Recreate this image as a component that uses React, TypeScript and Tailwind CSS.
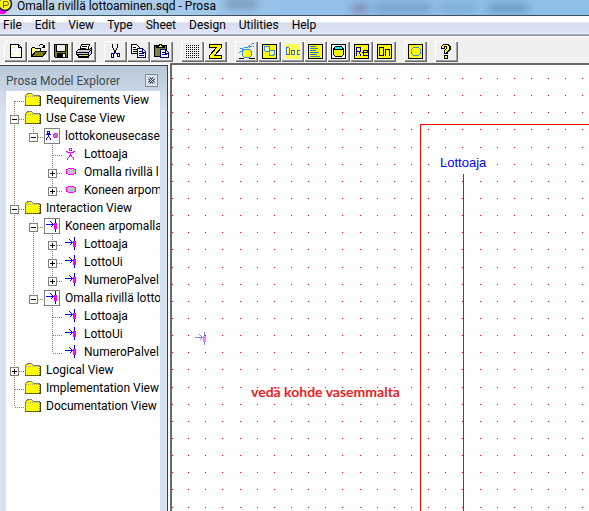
import React from "react";

type TreeItem = {
  label: string;
  icon: "folder" | "usecase" | "actor" | "oval" | "sequence" | "object";
  open?: boolean;
  children?: TreeItem[];
};

const lifelines: TreeItem[] = ["Lottoaja", "LottoUi", "NumeroPalvel"].map((label) => ({ label, icon: "object" }));

const tree: TreeItem[] = [
  { label: "Requirements View", icon: "folder" },
  {
    label: "Use Case View",
    icon: "folder",
    open: true,
    children: [
      {
        label: "lottokoneusecase.",
        icon: "usecase",
        open: true,
        children: [
          { label: "Lottoaja", icon: "actor" },
          { label: "Omalla rivillä l", icon: "oval", open: false },
          { label: "Koneen arpom", icon: "oval", open: false },
        ],
      },
    ],
  },
  {
    label: "Interaction View",
    icon: "folder",
    open: true,
    children: [
      {
        label: "Koneen arpomalla",
        icon: "sequence",
        open: true,
        children: lifelines.map((item) => ({ ...item, open: false })),
      },
      { label: "Omalla rivillä lotto", icon: "sequence", open: true, children: lifelines },
    ],
  },
  { label: "Logical View", icon: "folder", open: false },
  { label: "Implementation View", icon: "folder" },
  { label: "Documentation View", icon: "folder" },
];

function ObjectMark() {
  return (
    <>
      <path d="M2 7.5h8M6.5 4.5l3 3l-3 3M11.5 2v13" fill="none" stroke="#0000ff" />
      <path d="M10 6h3v6h-3z" fill="#ff00ff" />
    </>
  );
}

function TreeIcon({ icon }: { icon: TreeItem["icon"] }) {
  return (
    <svg width="16" height="18" viewBox="0 0 16 18" shapeRendering="crispEdges" className="shrink-0" aria-hidden="true">
      {icon === "folder" && (
        <>
          <path d="M0 4h1v-1h1v-1h5v1h1v1h7v11h-15z" fill="#ffff00" />
          <path d="M.5 14V4.5l1-1h1v-1h4l2 2h6" fill="none" stroke="#808080" />
          <path d="M1 5.5h13" stroke="#b0b060" strokeDasharray="1 1" />
          <path d="M0 14.5h15M15.5 5v10" stroke="#404000" />
          <path d="M1 14.5h14M14.5 5v10" stroke="#808000" strokeDasharray="1 1" />
        </>
      )}
      {icon === "usecase" && (
        <>
          <path d="M.5 1.5h15v15H.5z" fill="#fff" stroke="#808080" />
          <path d="M3.5 4.500h2v2h-2zM2 7.500h5M4.500 7v3M3.500 10v1M5.500 10v1M2.500 11v2M6.500 11v2" fill="none" stroke="#0000ff" />
          <path d="M9 7h1v-1h3v1h1v3h-1v1h-3v-1h-1z" fill="#ff00ff" />
          <path d="M10 7h3v3h-3z" fill="#c080c0" />
        </>
      )}
      {icon === "actor" && (
        <path d="M6.5 3.5h2v2h-2zM3 6.5h2M10 6.5h2M4 7.5h7M7.5 7v4M6.5 10v2M8.5 10v2M5.5 12v1M9.5 12v1M4.5 13v2M10.5 13v2" fill="none" stroke="#ff00ff" />
      )}
      {icon === "oval" && (
        <path d="M5.500 5.500h5l1 1h1v4h-1l-1 1h-5l-1-1h-1v-4h1z" fill="#c0c0c0" stroke="#ff00ff" />
      )}
      {icon === "sequence" && (
        <>
          <path d="M.5 1.5h15v15H.5z" fill="#fff" stroke="#808080" />
          <ObjectMark />
        </>
      )}
      {icon === "object" && <ObjectMark />}
    </svg>
  );
}

function Guide({ d }: { d: string }) {
  return (
    <svg width="19" height="18" viewBox="0 0 19 18" shapeRendering="crispEdges" className="shrink-0" aria-hidden="true">
      <path d={d} fill="none" stroke="#808080" strokeDasharray="1 1" />
    </svg>
  );
}

function TreeRows({ items, trail = [] }: { items: TreeItem[]; trail?: boolean[] }) {
  return (
    <ul>
      {items.map((item, i) => {
        const last = i === items.length - 1;
        const first = trail.length === 0 && i === 0;
        const vertical = `M8.5 ${first ? 10 : 0}V${last ? 10 : 18}`;
        return (
          <li key={item.label}>
            <div className="flex h-[18px] items-center whitespace-nowrap">
              {trail.map((line, n) => (
                <Guide key={n} d={line ? "M8.500 0V18" : ""} />
              ))}
              <span className="relative h-[18px] w-[19px] shrink-0">
                <Guide d={`${vertical}M9 10.5H19`} />
                {item.open !== undefined && (
                  <button
                    aria-label={`${item.open ? "Collapse" : "Expand"} ${item.label}`}
                    className="absolute top-[6px] left-1 size-[9px] border border-[#808080] bg-white"
                  >
                    <svg viewBox="0 0 7 7" className="size-[7px]" shapeRendering="crispEdges">
                      <path d={item.open ? "M1 3.500h5" : "M1 3.500h5M3.500 1v5"} stroke="#000" />
                    </svg>
                  </button>
                )}
              </span>
              <TreeIcon icon={item.icon} />
              <span className="ml-[5px]">{item.label}</span>
            </div>
            {item.children && <TreeRows items={item.children} trail={[...trail, !last]} />}
          </li>
        );
      })}
    </ul>
  );
}

const YellowBox = ({ fill = "#ffff00" }: { fill?: string }) => (
  <path d="M4.500 3.500h14v14h-14z" fill={fill} stroke="#000" />
);

const gridDots = Array.from({ length: 49 }, (_, i) => `M${5 + (i % 7) * 2} ${4.5 + Math.floor(i / 7) * 2}h1`).join("");

const toolGroups: { name: string; art: React.ReactNode }[][] = [
  [
    {
      name: "New",
      art: (
        <>
          <path d="M6.500 3.500h8l3 3v10h-11z" fill="#fff" stroke="#000" />
          <path d="M14.500 3.500v3h3" fill="none" stroke="#000" />
          <path d="M8 6h1v1h-1zM11 9h1v1h-1zM8 13h1v1h-1zM14 13h1v1h-1zM15 10h1v1h-1z" fill="#e8e800" />
        </>
      ),
    },
    {
      name: "Open",
      art: (
        <>
          <path d="M4.500 15.500v-8l1-1h2l1 1h5v3" fill="#ffff80" stroke="#000" />
          <path d="M4.500 15.500l4-5h11l-4 5z" fill="#808000" stroke="#000" />
          <path d="M12 4.500h1M13 3.500h3M16 4.500h1M17.500 4v3M15 6.500h3M16 5.500h2" fill="none" stroke="#000" />
        </>
      ),
    },
    {
      name: "Save",
      art: (
        <>
          <path d="M4.500 3.500h13v13h-12l-1-1z" fill="#808000" stroke="#000" />
          <path d="M7 4h8v6H7z" fill="#f0f0f0" />
          <path d="M6.500 4v6.500h9V4" fill="none" stroke="#000" />
          <path d="M7 12h9v5H7z" />
          <path d="M13 13h2v3h-2z" fill="#fff" />
        </>
      ),
    },
    {
      name: "Print",
      art: (
        <>
          <path d="M8.500 3.500h8l-2 6h-8z" fill="#fff" stroke="#000" />
          <path d="M9 5.500h5M8 7.500h5" stroke="#000" />
          <path d="M3.500 10.500l2-2h11l2-2v6l-3 3h-10l-2-2z" fill="#d0d0d0" stroke="#000" />
          <path d="M3.500 11.500h12l3-3M5.500 13.500v3h10v-3M4 13.500h11M15.500 11v4" fill="none" stroke="#000" />
          <path d="M11 14h3v1h-3z" fill="#ffff00" />
        </>
      ),
    },
  ],
  [
    {
      name: "Cut",
      art: (
        <>
          <path d="M8.500 3v4M13.500 3v4M9.500 7v2M12.500 7v2M10.500 9v2M11.500 9v2" stroke="#000" />
          <path d="M10.500 11v2M11.500 11v1M12.500 12v1M7.500 12.500h2v4h-2zM13.500 12.500h2v3h-2z" fill="none" stroke="#000080" />
        </>
      ),
    },
    {
      name: "Copy",
      art: (
        <>
          <path d="M4.500 3.500h5l3 3v6h-8z" fill="#fff" stroke="#000" />
          <path d="M6 6.500h3M6 8.500h4M6 10.500h4" stroke="#000" />
          <path d="M10.500 7.500h5l3 3v6h-8z" fill="#fff" stroke="#000080" />
          <path d="M12 10.500h3M12 12.500h5M12 14.500h5M15.500 8v3h3" fill="none" stroke="#000080" />
        </>
      ),
    },
    {
      name: "Paste",
      art: (
        <>
          <path d="M4.500 4.500h12v11h-12z" fill="#808040" stroke="#000" />
          <path d="M6.500 6.500v-1h2l1-2h2l1 2h2v1z" fill="#ffff00" stroke="#000" />
          <path d="M10.500 8.500h5l3 3v5h-8z" fill="#fff" stroke="#000080" />
          <path d="M12 11.500h3M12 13.500h5M15.500 9v3h3" fill="none" stroke="#000080" />
        </>
      ),
    },
  ],
  [
    { name: "Grid", art: <path d={gridDots} stroke="#000" /> },
    {
      name: "Zoom",
      art: <path d="M5.500 3.500h12v3l-7 8h7v3h-12v-3l7-8h-7z" fill="#ffff00" stroke="#000" />,
    },
  ],
  [
    {
      name: "Use case",
      art: (
        <>
          <path d="M4 17.500h5M14 17.500h6" stroke="#000" />
          <path d="M9.500 8.500h5l2 2v4l-2 2h-5l-2-2v-4z" fill="#ffff00" stroke="#3090f0" />
          <path d="M4 12l6-5l9-2M5 8l7-2l7-4" fill="none" stroke="#3090f0" strokeDasharray="3 1" />
        </>
      ),
    },
    {
      name: "Model",
      art: (
        <>
          <YellowBox />
          <path d="M6.500 5.500h5v5h-4l-1-1zM11.500 9.500h5v4l-2 1h-3z" fill="#ffffa0" stroke="#3090f0" />
        </>
      ),
    },
    {
      name: "Document",
      art: (
        <>
          <path d="M4 3h15v15H4z" fill="#ffff50" />
          <path d="M4 4.500h15M4 6.500h15M4 8.500h15M4 10.500h15M4 12.500h15M4 14.500h15M4 16.500h15" stroke="#fff" strokeDasharray="1 1" />
          <path d="M5.500 6.500h2l1 1v6h-3zM10.500 9.500h3v4h-3zM19 9.500h-3v4h3" fill="none" stroke="#3070c0" />
        </>
      ),
    },
    {
      name: "Code",
      art: (
        <>
          <YellowBox />
          <path d="M6 5.500h6M6 7.500h8M6 9.500h6M6 11.500h9M6 13.500h7M6 15.500h10" stroke="#3078d0" />
        </>
      ),
    },
    {
      name: "Database",
      art: (
        <>
          <YellowBox fill="#fff" />
          <path d="M6.500 7.500l2-2h6l2 2v6l-2 2h-6l-2-2z" fill="#ffff00" stroke="#000" />
          <path d="M8.500 5.500h6l2 2l-2 1h-6l-2-1z" fill="#00ffff" stroke="#000" />
        </>
      ),
    },
    {
      name: "Re",
      art: (
        <>
          <YellowBox />
          <path d="M6.500 15V6.500h4v4h-4M9.500 11v2M10.500 13v2M12 11.500h5v-2h-3.500v5h4" fill="none" stroke="#000080" />
        </>
      ),
    },
    {
      name: "On",
      art: (
        <>
          <YellowBox />
          <path d="M6.500 6.500h4v8h-4zM12.500 15V8.500h4V15" fill="none" stroke="#000080" />
        </>
      ),
    },
  ],
  [
    {
      name: "Round",
      art: (
        <>
          <YellowBox />
          <path d="M9.500 6.500h5l2 2v4l-2 2h-5l-2-2v-4z" fill="none" stroke="#3090f0" />
        </>
      ),
    },
  ],
  [
    {
      name: "Help",
      art: (
        <>
          <path d="M6 5h1V4h1V3h6v1h1v1h1v4h-1v1h-1v1h-1v2h-4V9h1V8h1V6h-1v2H6zM9 14h4v4H9z" fill="#000" />
          <path d="M7 5h1V4h5v1h1v4h-1v1h-1v1h-1v1h-1V9h1V8h1V5h-3v2H7zM10 15h2v2h-2z" fill="#ffff00" />
        </>
      ),
    },
  ],
];

const menus = ["File", "Edit", "View", "Type", "Sheet", "Design", "Utilities", "Help"];

const PITCH = 120 / 7;
const canvasDots = Array.from({ length: 60 * 60 }, (_, i) => {
  const x = Math.max(0, Math.round((i % 60) * PITCH - 1));
  const y = Math.round(13 + Math.floor(i / 60) * PITCH);
  return `M${x} ${y}h1v1h-1z`;
}).join("");

export default function App() {
  return (
    <div className="flex h-screen flex-col overflow-hidden bg-[#f0f0f0] font-[Roboto,'Noto_Sans',sans-serif] text-[12px] text-black">
      <header className="relative flex h-4 shrink-0 items-start overflow-hidden border-b border-[#3c5064] bg-linear-to-r from-[#c4d8ea] via-[#93c0e8] via-50% to-[#8fc0e6]">
        <span className="absolute top-0 left-[225px] h-2 w-8 bg-[#49627c]/50 blur-xs" />
        <span className="absolute top-1 left-[352px] h-2 w-4 bg-[#704868]/50 blur-xs" />
        <span className="absolute top-1 left-[375px] h-2 w-14 bg-[#5078a0]/50 blur-xs" />
        <span className="absolute top-1 left-[440px] h-2 w-9 bg-[#5c88b4]/40 blur-xs" />
        <span className="absolute top-1 left-[488px] h-2 w-10 bg-[#406890]/50 blur-xs" />
        <svg width="13" height="15" viewBox="0 0 13 15" className="relative shrink-0" aria-hidden="true">
          <path d="M0 7l7 5l-3 2H0z" fill="#ff00ff" />
          <circle cx="5" cy="4" r="6.500" fill="#ffff00" stroke="#101070" strokeWidth="1.500" />
          <path d="M3.500 8V1.500h3a1.500 1.500 0 0 1 0 4h-3" fill="none" stroke="#606000" />
        </svg>
        <h1 className="relative ml-1 leading-3 whitespace-nowrap">Omalla rivillä lottoaminen.sqd - Prosa</h1>
      </header>

      <nav className="flex h-[19px] shrink-0 items-center gap-[13px] border-b border-[#a8b0c4] bg-linear-to-b from-white from-30% via-[#d6dcee] via-40% to-[#e0e6f6] pl-[3px]">
        {menus.map((menu) => (
          <button key={menu} className="leading-4">
            {menu}
          </button>
        ))}
      </nav>

      <div role="toolbar" className="flex h-7 shrink-0 items-center gap-2 border-t border-[#909090] pt-1 pb-px pl-1 shadow-[inset_0_1px_0_#fff]">
        {toolGroups.map((group, i) => (
          <div key={i} className="flex">
            {group.map((tool) => (
              <button
                key={tool.name}
                aria-label={tool.name}
                className="h-[21px] w-[23px] bg-[#f0f0f0] shadow-[inset_1px_1px_0_#fff,inset_-1px_-1px_0_#696969,inset_-2px_-2px_0_#a0a0a0]"
              >
                <svg viewBox="0 0 23 21" className="h-[21px] w-[23px]" shapeRendering="crispEdges">
                  {tool.art}
                </svg>
              </button>
            ))}
          </div>
        ))}
      </div>

      <div className="flex min-h-0 flex-1 bg-white">
        <aside className="mt-[2px] flex w-[168px] shrink-0 flex-col border-t border-r border-[#404048] bg-linear-to-b from-[#b9c8d8] to-[#d7e3f0] to-10% pr-[7px] pl-[6px]">
          <div className="flex h-[25px] shrink-0 items-center justify-between pt-1">
            <h2 className="whitespace-nowrap text-[#404a58]">Prosa Model Explorer</h2>
            <button
              aria-label="Close"
              className="mr-[2px] flex size-[13px] items-center justify-center border border-[#7b8ba0] bg-[#dce6f2]"
            >
              <svg viewBox="0 0 9 9" className="size-[9px]">
                <path d="M2 2l5 5M7 2l-5 5" stroke="#404a60" strokeWidth="3" />
                <path d="M2 2l5 5M7 2l-5 5" stroke="#fff" />
              </svg>
            </button>
          </div>
          <div className="min-h-0 flex-1 overflow-hidden bg-white">
            <TreeRows items={tree} />
          </div>
        </aside>

        <main className="relative ml-[2px] min-w-0 flex-1 overflow-hidden border-t-2 border-l-2 border-[#696969] bg-white">
          <svg className="absolute inset-0 size-full" shapeRendering="crispEdges" aria-hidden="true">
            <path d={canvasDots} fill="#ff0000" />
            <path d="M2000 59.500H248.500V2000M291.500 109V2000" fill="none" stroke="#ff0000" />
            <g opacity="0.5" transform="translate(21 265)">
              <ObjectMark />
            </g>
          </svg>
          <span className="absolute top-[90px] left-[268px] font-['Liberation_Sans',sans-serif] text-[13px] leading-4 text-[#0000ff]">
            Lottoaja
          </span>
          <span className="absolute top-[317px] left-[79px] font-[Lato,sans-serif] text-[14px] leading-5 font-bold whitespace-nowrap text-[#ed1c24]">
            vedä kohde vasemmalta
          </span>
        </main>
      </div>
    </div>
  );
}
